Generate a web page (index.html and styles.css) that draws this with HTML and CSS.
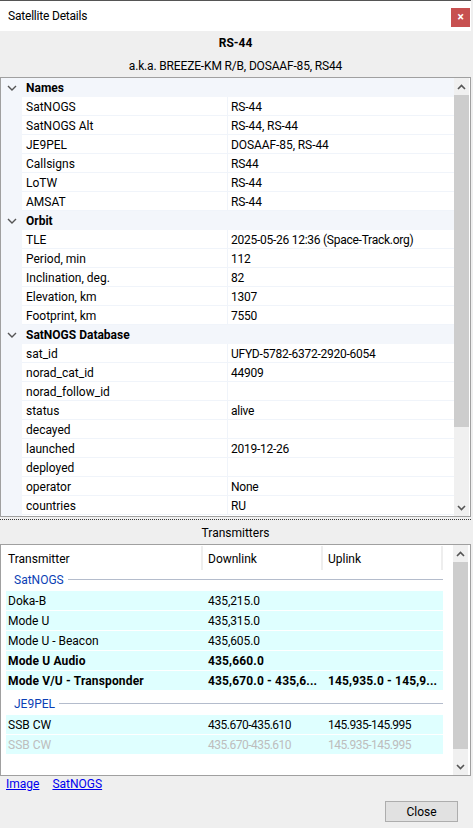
FILE: index.html
```html
<!DOCTYPE html>
<html lang="en">
<head>
    <meta charset="UTF-8">
    <meta name="viewport" content="width=device-width, initial-scale=1.0">
    <title>Satellite Details</title>
    <link rel="stylesheet" href="styles.css">
</head>
<body>

<div class="dialog">
    <div class="titlebar">
        <span>Satellite Details</span>
        <div class="close-x">&#215;</div>
    </div>

    <div class="sat-name">RS-44</div>
    <div class="sat-aka">a.k.a. BREEZE-KM R/B, DOSAAF-85, RS44</div>

    <div class="panel tree-panel">
        <div class="tree">
            <div class="group"><svg class="chev" width="10" height="6" viewBox="0 0 10 6"><path d="M1 1l4 4 4-4" fill="none" stroke="#555" stroke-width="1.4"/></svg><b>Names</b></div>
            <div class="row"><div class="key">SatNOGS</div><div class="val name-val">RS-44</div></div>
            <div class="row"><div class="key">SatNOGS Alt</div><div class="val name-val">RS-44, RS-44</div></div>
            <div class="row"><div class="key">JE9PEL</div><div class="val name-val">DOSAAF-85, RS-44</div></div>
            <div class="row"><div class="key">Callsigns</div><div class="val name-val">RS44</div></div>
            <div class="row"><div class="key">LoTW</div><div class="val name-val">RS-44</div></div>
            <div class="row"><div class="key">AMSAT</div><div class="val name-val">RS-44</div></div>
            <div class="group"><svg class="chev" width="10" height="6" viewBox="0 0 10 6"><path d="M1 1l4 4 4-4" fill="none" stroke="#555" stroke-width="1.4"/></svg><b>Orbit</b></div>
            <div class="row"><div class="key">TLE</div><div class="val">2025-05-26 12:36 (Space-Track.org)</div></div>
            <div class="row"><div class="key">Period, min</div><div class="val">112</div></div>
            <div class="row"><div class="key">Inclination, deg.</div><div class="val">82</div></div>
            <div class="row"><div class="key">Elevation, km</div><div class="val">1307</div></div>
            <div class="row"><div class="key">Footprint, km</div><div class="val">7550</div></div>
            <div class="group"><svg class="chev" width="10" height="6" viewBox="0 0 10 6"><path d="M1 1l4 4 4-4" fill="none" stroke="#555" stroke-width="1.4"/></svg><b>SatNOGS Database</b></div>
            <div class="row"><div class="key">sat_id</div><div class="val">UFYD-5782-6372-2920-6054</div></div>
            <div class="row"><div class="key">norad_cat_id</div><div class="val">44909</div></div>
            <div class="row"><div class="key">norad_follow_id</div><div class="val"></div></div>
            <div class="row"><div class="key">status</div><div class="val">alive</div></div>
            <div class="row"><div class="key">decayed</div><div class="val"></div></div>
            <div class="row"><div class="key">launched</div><div class="val">2019-12-26</div></div>
            <div class="row"><div class="key">deployed</div><div class="val"></div></div>
            <div class="row"><div class="key">operator</div><div class="val">None</div></div>
            <div class="row"><div class="key">countries</div><div class="val">RU</div></div>
        </div>
        <div class="scrollbar">
            <svg class="arrow" width="9" height="6" viewBox="0 0 9 6"><path d="M1 5l3.5-3.5L8 5" fill="none" stroke="#555" stroke-width="1.6"/></svg>
            <div class="thumb tree-thumb"></div>
            <div class="track"></div>
            <svg class="arrow" width="9" height="6" viewBox="0 0 9 6"><path d="M1 1l3.5 3.5L8 1" fill="none" stroke="#555" stroke-width="1.6"/></svg>
        </div>
    </div>

    <div class="splitter"></div>
    <div class="tx-title">Transmitters</div>

    <div class="panel tx-panel">
        <div class="tx-list">
            <div class="tx-head">
                <div class="col-name">Transmitter</div>
                <div class="col-down">Downlink</div>
                <div class="col-up">Uplink</div>
            </div>
            <div class="tx-group"><span>SatNOGS</span><i></i></div>
            <div class="tx-row"><div class="col-name">Doka-B</div><div class="col-down">435,215.0</div><div class="col-up"></div></div>
            <div class="tx-row"><div class="col-name">Mode U</div><div class="col-down">435,315.0</div><div class="col-up"></div></div>
            <div class="tx-row"><div class="col-name">Mode U - Beacon</div><div class="col-down">435,605.0</div><div class="col-up"></div></div>
            <div class="tx-row bold"><div class="col-name">Mode U Audio</div><div class="col-down">435,660.0</div><div class="col-up"></div></div>
            <div class="tx-row bold"><div class="col-name">Mode V/U - Transponder</div><div class="col-down">435,670.0 - 435,6...</div><div class="col-up">145,935.0 - 145,9...</div></div>
            <div class="tx-group"><span>JE9PEL</span><i></i></div>
            <div class="tx-row range"><div class="col-name">SSB CW</div><div class="col-down">435.670-435.610</div><div class="col-up">145.935-145.995</div></div>
            <div class="tx-row range dim"><div class="col-name">SSB CW</div><div class="col-down">435.670-435.610</div><div class="col-up">145.935-145.995</div></div>
        </div>
        <div class="scrollbar">
            <svg class="arrow" width="9" height="6" viewBox="0 0 9 6"><path d="M1 5l3.5-3.5L8 5" fill="none" stroke="#555" stroke-width="1.6"/></svg>
            <div class="thumb tx-thumb"></div>
            <div class="track"></div>
            <svg class="arrow" width="9" height="6" viewBox="0 0 9 6"><path d="M1 1l3.5 3.5L8 1" fill="none" stroke="#555" stroke-width="1.6"/></svg>
        </div>
    </div>

    <div class="links"><a href="#">Image</a><a href="#">SatNOGS</a></div>
    <div class="footer"><button type="button">Close</button></div>
</div>

</body>
</html>
```

FILE: styles.css
```css
html, body {
    margin: 0;
    height: 100%;
    background: #efefef;
}
body {
    font-family: Roboto, "Noto Sans", sans-serif;
    font-size: 12px;
    color: #000;
}
.dialog {
    width: 471px;
    height: 828px;
    display: flex;
    flex-direction: column;
    border-top: 1px solid #555;
    box-sizing: border-box;
    background: #efefef;
}
.titlebar {
    height: 30px;
    flex: none;
    background: #fff;
    display: flex;
    align-items: center;
    justify-content: space-between;
    padding-left: 8px;
    padding-right: 1px;
    letter-spacing: -0.2px;
}
.close-x {
    width: 19px;
    height: 19px;
    background: #c75050;
    color: #fff;
    font-weight: bold;
    font-size: 12px;
    line-height: 19px;
    text-align: center;
    margin-top: 3px;
}
.sat-name {
    height: 24px;
    line-height: 24px;
    text-align: center;
    font-weight: bold;
    flex: none;
}
.sat-aka {
    height: 22px;
    line-height: 22px;
    text-align: center;
    flex: none;
    letter-spacing: -0.16px;
}
.panel {
    display: flex;
    background: #fff;
    border: 1px solid #a0a0a0;
    flex: none;
    box-sizing: border-box;
}
.tree-panel {
    height: 440px;
}
.tree {
    flex: 1;
    overflow: hidden;
    background: linear-gradient(#f3f6fb, #f3f6fb) 0 0 / 21px 100% no-repeat #fff;
}
.group {
    height: 19px;
    box-sizing: border-box;
    padding-top: 1px;
    background: #f3f6fb;
    display: flex;
    align-items: center;
    padding-left: 6px;
}
.group b {
    margin-left: 9px;
}
.chev {
    flex: none;
}
.row {
    height: 19px;
    display: flex;
    margin-left: 21px;
    box-sizing: border-box;
    border-bottom: 1px solid #f0f4fa;
    line-height: 20px;
    background: #fff;
}
.key {
    width: 206px;
    padding-left: 4px;
    box-sizing: border-box;
    border-right: 1px solid #f0f4fa;
}
.val {
    padding-left: 3px;
    letter-spacing: -0.26px;
}
.val.name-val {
    letter-spacing: -0.08px;
}
.scrollbar {
    width: 15px;
    flex: none;
    background: #f0f0f0;
    display: flex;
    flex-direction: column;
    align-items: center;
    margin-right: 1px;
}
.arrow {
    flex: none;
    margin: 6px 0 5px;
}
.thumb {
    width: 100%;
    background: #cdcdcd;
    flex: none;
}
.tree-thumb {
    height: 332px;
}
.tx-thumb {
    height: 187px;
}
.track {
    flex: 1;
}
.splitter {
    height: 4px;
    flex: none;
    box-sizing: border-box;
    padding-top: 2px;
}
.splitter::before {
    content: "";
    display: block;
    border-top: 1px dotted #333;
}
.tx-title {
    height: 23px;
    line-height: 25px;
    text-align: center;
    flex: none;
}
.tx-panel {
    height: 232px;
}
.tx-panel .scrollbar {
    margin-right: 2px;
}
.tx-list {
    flex: 1;
    padding-left: 5px;
    padding-right: 10px;
    overflow: hidden;
}
.tx-head {
    display: flex;
    height: 24px;
    line-height: 26px;
    margin-top: 1px;
    margin-bottom: -3px;
}
.tx-head .col-down, .tx-head .col-up {
    border-left: 2px solid #eee;
    height: 24px;
}
.tx-head .col-up {
    border-right: 2px solid #eee;
}
.col-name {
    width: 195px;
    flex: none;
    padding-left: 2px;
    box-sizing: border-box;
    white-space: nowrap;
}
.col-down {
    width: 120px;
    flex: none;
    padding-left: 5px;
    box-sizing: border-box;
    white-space: nowrap;
}
.col-up {
    flex: 1;
    padding-left: 5px;
    white-space: nowrap;
}
.tx-row .col-down, .tx-row .col-up {
    padding-left: 7px;
    letter-spacing: -0.1px;
}
.tx-row.range .col-down, .tx-row.range .col-up {
    letter-spacing: -0.5px;
}
.tx-group {
    height: 24px;
    display: flex;
    align-items: center;
    padding-left: 8px;
    color: #0b3fb5;
}
.tx-group span {
    padding-top: 1px;
}
.tx-group i {
    flex: 1;
    height: 1px;
    background: #b4bccc;
    margin-left: 4px;
}
.tx-row {
    display: flex;
    height: 19px;
    line-height: 21px;
    background: #dfffff;
    margin-bottom: 1px;
}
.tx-row.bold {
    font-weight: bold;
}
.tx-row.bold .col-name, .tx-row.bold .col-down, .tx-row.bold .col-up {
    letter-spacing: 0.15px;
}
.tx-row.dim {
    color: #bdbdbd;
}
.links {
    height: 19px;
    line-height: 17px;
    padding-left: 6px;
    display: flex;
    gap: 13px;
    flex: none;
}
.links a {
    color: #0000ee;
}
.footer {
    display: flex;
    justify-content: flex-end;
    padding-right: 13px;
    padding-top: 6px;
}
button {
    width: 73px;
    height: 21px;
    font-family: inherit;
    font-size: 12px;
    background: #e1e1e1;
    border: 1px solid #adadad;
    padding: 0;
}
```
